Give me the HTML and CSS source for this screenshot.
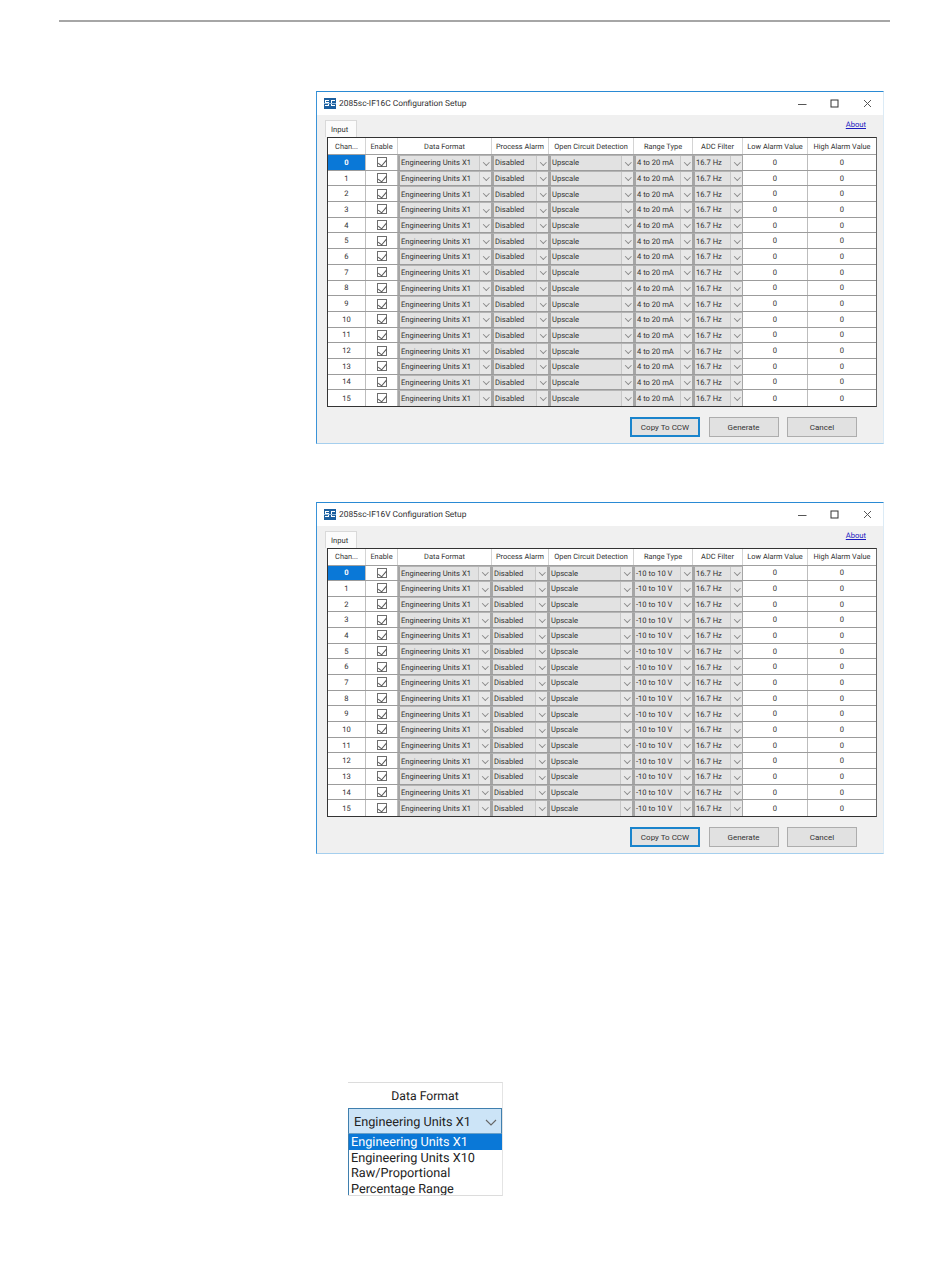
FILE: index.html
```html
<!DOCTYPE html>
<html lang="en">
<head>
<meta charset="utf-8">
<title>2085sc configuration setup</title>
<link rel="stylesheet" href="styles.css">
</head>
<body>
<div class="rule"></div>

<section class="window w1">
  <header class="titlebar">
    <svg class="logo" viewBox="0 0 12 11"><rect width="12" height="11" fill="#1c5f9f"/><path d="M1 2h4v1H2v1h3v4H1V7h3V5H1zM7 2h4v1H8v4h3v1H7z" fill="#fff"/><rect y="5" width="12" height="1" fill="#8fb6d8"/></svg>
    <span class="title">2085sc-IF16C Configuration Setup</span>
    <div class="controls">
      <svg viewBox="0 0 9 9"><path d="M0 5.5h8.5" stroke="#555" fill="none"/></svg>
      <svg viewBox="0 0 9 9"><rect x="1" y="1" width="7" height="7" stroke="#333" fill="none"/></svg>
      <svg viewBox="0 0 9 9"><path d="M1 1l7 7M8 1l-7 7" stroke="#555" fill="none"/></svg>
    </div>
  </header>
  <div class="client">
    <div class="tabs"><span class="tab">Input</span><a class="about">About</a></div>
    <div class="grid">
      <div class="row head"><div class="cell">Chan...</div><div class="cell">Enable</div><div class="cell">Data Format</div><div class="cell">Process Alarm</div><div class="cell">Open Circuit Detection</div><div class="cell">Range Type</div><div class="cell">ADC Filter</div><div class="cell">Low Alarm Value</div><div class="cell">High Alarm Value</div></div>
      <div class="row"><div class="cell current">0</div><div class="cell"><i class="chk"></i></div><div class="sel"><span>Engineering Units X1</span><i class="dd"></i></div><div class="sel"><span>Disabled</span><i class="dd"></i></div><div class="sel"><span>Upscale</span><i class="dd"></i></div><div class="sel"><span>4 to 20 mA</span><i class="dd"></i></div><div class="sel"><span>16.7 Hz</span><i class="dd"></i></div><div class="cell">0</div><div class="cell">0</div></div>
      <div class="row"><div class="cell">1</div><div class="cell"><i class="chk"></i></div><div class="sel"><span>Engineering Units X1</span><i class="dd"></i></div><div class="sel"><span>Disabled</span><i class="dd"></i></div><div class="sel"><span>Upscale</span><i class="dd"></i></div><div class="sel"><span>4 to 20 mA</span><i class="dd"></i></div><div class="sel"><span>16.7 Hz</span><i class="dd"></i></div><div class="cell">0</div><div class="cell">0</div></div>
      <div class="row"><div class="cell">2</div><div class="cell"><i class="chk"></i></div><div class="sel"><span>Engineering Units X1</span><i class="dd"></i></div><div class="sel"><span>Disabled</span><i class="dd"></i></div><div class="sel"><span>Upscale</span><i class="dd"></i></div><div class="sel"><span>4 to 20 mA</span><i class="dd"></i></div><div class="sel"><span>16.7 Hz</span><i class="dd"></i></div><div class="cell">0</div><div class="cell">0</div></div>
      <div class="row"><div class="cell">3</div><div class="cell"><i class="chk"></i></div><div class="sel"><span>Engineering Units X1</span><i class="dd"></i></div><div class="sel"><span>Disabled</span><i class="dd"></i></div><div class="sel"><span>Upscale</span><i class="dd"></i></div><div class="sel"><span>4 to 20 mA</span><i class="dd"></i></div><div class="sel"><span>16.7 Hz</span><i class="dd"></i></div><div class="cell">0</div><div class="cell">0</div></div>
      <div class="row"><div class="cell">4</div><div class="cell"><i class="chk"></i></div><div class="sel"><span>Engineering Units X1</span><i class="dd"></i></div><div class="sel"><span>Disabled</span><i class="dd"></i></div><div class="sel"><span>Upscale</span><i class="dd"></i></div><div class="sel"><span>4 to 20 mA</span><i class="dd"></i></div><div class="sel"><span>16.7 Hz</span><i class="dd"></i></div><div class="cell">0</div><div class="cell">0</div></div>
      <div class="row"><div class="cell">5</div><div class="cell"><i class="chk"></i></div><div class="sel"><span>Engineering Units X1</span><i class="dd"></i></div><div class="sel"><span>Disabled</span><i class="dd"></i></div><div class="sel"><span>Upscale</span><i class="dd"></i></div><div class="sel"><span>4 to 20 mA</span><i class="dd"></i></div><div class="sel"><span>16.7 Hz</span><i class="dd"></i></div><div class="cell">0</div><div class="cell">0</div></div>
      <div class="row"><div class="cell">6</div><div class="cell"><i class="chk"></i></div><div class="sel"><span>Engineering Units X1</span><i class="dd"></i></div><div class="sel"><span>Disabled</span><i class="dd"></i></div><div class="sel"><span>Upscale</span><i class="dd"></i></div><div class="sel"><span>4 to 20 mA</span><i class="dd"></i></div><div class="sel"><span>16.7 Hz</span><i class="dd"></i></div><div class="cell">0</div><div class="cell">0</div></div>
      <div class="row"><div class="cell">7</div><div class="cell"><i class="chk"></i></div><div class="sel"><span>Engineering Units X1</span><i class="dd"></i></div><div class="sel"><span>Disabled</span><i class="dd"></i></div><div class="sel"><span>Upscale</span><i class="dd"></i></div><div class="sel"><span>4 to 20 mA</span><i class="dd"></i></div><div class="sel"><span>16.7 Hz</span><i class="dd"></i></div><div class="cell">0</div><div class="cell">0</div></div>
      <div class="row"><div class="cell">8</div><div class="cell"><i class="chk"></i></div><div class="sel"><span>Engineering Units X1</span><i class="dd"></i></div><div class="sel"><span>Disabled</span><i class="dd"></i></div><div class="sel"><span>Upscale</span><i class="dd"></i></div><div class="sel"><span>4 to 20 mA</span><i class="dd"></i></div><div class="sel"><span>16.7 Hz</span><i class="dd"></i></div><div class="cell">0</div><div class="cell">0</div></div>
      <div class="row"><div class="cell">9</div><div class="cell"><i class="chk"></i></div><div class="sel"><span>Engineering Units X1</span><i class="dd"></i></div><div class="sel"><span>Disabled</span><i class="dd"></i></div><div class="sel"><span>Upscale</span><i class="dd"></i></div><div class="sel"><span>4 to 20 mA</span><i class="dd"></i></div><div class="sel"><span>16.7 Hz</span><i class="dd"></i></div><div class="cell">0</div><div class="cell">0</div></div>
      <div class="row"><div class="cell">10</div><div class="cell"><i class="chk"></i></div><div class="sel"><span>Engineering Units X1</span><i class="dd"></i></div><div class="sel"><span>Disabled</span><i class="dd"></i></div><div class="sel"><span>Upscale</span><i class="dd"></i></div><div class="sel"><span>4 to 20 mA</span><i class="dd"></i></div><div class="sel"><span>16.7 Hz</span><i class="dd"></i></div><div class="cell">0</div><div class="cell">0</div></div>
      <div class="row"><div class="cell">11</div><div class="cell"><i class="chk"></i></div><div class="sel"><span>Engineering Units X1</span><i class="dd"></i></div><div class="sel"><span>Disabled</span><i class="dd"></i></div><div class="sel"><span>Upscale</span><i class="dd"></i></div><div class="sel"><span>4 to 20 mA</span><i class="dd"></i></div><div class="sel"><span>16.7 Hz</span><i class="dd"></i></div><div class="cell">0</div><div class="cell">0</div></div>
      <div class="row"><div class="cell">12</div><div class="cell"><i class="chk"></i></div><div class="sel"><span>Engineering Units X1</span><i class="dd"></i></div><div class="sel"><span>Disabled</span><i class="dd"></i></div><div class="sel"><span>Upscale</span><i class="dd"></i></div><div class="sel"><span>4 to 20 mA</span><i class="dd"></i></div><div class="sel"><span>16.7 Hz</span><i class="dd"></i></div><div class="cell">0</div><div class="cell">0</div></div>
      <div class="row"><div class="cell">13</div><div class="cell"><i class="chk"></i></div><div class="sel"><span>Engineering Units X1</span><i class="dd"></i></div><div class="sel"><span>Disabled</span><i class="dd"></i></div><div class="sel"><span>Upscale</span><i class="dd"></i></div><div class="sel"><span>4 to 20 mA</span><i class="dd"></i></div><div class="sel"><span>16.7 Hz</span><i class="dd"></i></div><div class="cell">0</div><div class="cell">0</div></div>
      <div class="row"><div class="cell">14</div><div class="cell"><i class="chk"></i></div><div class="sel"><span>Engineering Units X1</span><i class="dd"></i></div><div class="sel"><span>Disabled</span><i class="dd"></i></div><div class="sel"><span>Upscale</span><i class="dd"></i></div><div class="sel"><span>4 to 20 mA</span><i class="dd"></i></div><div class="sel"><span>16.7 Hz</span><i class="dd"></i></div><div class="cell">0</div><div class="cell">0</div></div>
      <div class="row"><div class="cell">15</div><div class="cell"><i class="chk"></i></div><div class="sel"><span>Engineering Units X1</span><i class="dd"></i></div><div class="sel"><span>Disabled</span><i class="dd"></i></div><div class="sel"><span>Upscale</span><i class="dd"></i></div><div class="sel"><span>4 to 20 mA</span><i class="dd"></i></div><div class="sel"><span>16.7 Hz</span><i class="dd"></i></div><div class="cell">0</div><div class="cell">0</div></div>
    </div>
    <div class="buttons"><button class="btn primary">Copy To CCW</button><button class="btn">Generate</button><button class="btn">Cancel</button></div>
  </div>
</section>

<section class="window w2">
  <header class="titlebar">
    <svg class="logo" viewBox="0 0 12 11"><rect width="12" height="11" fill="#1c5f9f"/><path d="M1 2h4v1H2v1h3v4H1V7h3V5H1zM7 2h4v1H8v4h3v1H7z" fill="#fff"/><rect y="5" width="12" height="1" fill="#8fb6d8"/></svg>
    <span class="title">2085sc-IF16V Configuration Setup</span>
    <div class="controls">
      <svg viewBox="0 0 9 9"><path d="M0 5.5h8.5" stroke="#555" fill="none"/></svg>
      <svg viewBox="0 0 9 9"><rect x="1" y="1" width="7" height="7" stroke="#333" fill="none"/></svg>
      <svg viewBox="0 0 9 9"><path d="M1 1l7 7M8 1l-7 7" stroke="#555" fill="none"/></svg>
    </div>
  </header>
  <div class="client">
    <div class="tabs"><span class="tab">Input</span><a class="about">About</a></div>
    <div class="grid">
      <div class="row head"><div class="cell">Chan...</div><div class="cell">Enable</div><div class="cell">Data Format</div><div class="cell">Process Alarm</div><div class="cell">Open Circuit Detection</div><div class="cell">Range Type</div><div class="cell">ADC Filter</div><div class="cell">Low Alarm Value</div><div class="cell">High Alarm Value</div></div>
      <div class="row"><div class="cell current">0</div><div class="cell"><i class="chk"></i></div><div class="sel"><span>Engineering Units X1</span><i class="dd"></i></div><div class="sel"><span>Disabled</span><i class="dd"></i></div><div class="sel"><span>Upscale</span><i class="dd"></i></div><div class="sel"><span>-10 to 10 V</span><i class="dd"></i></div><div class="sel"><span>16.7 Hz</span><i class="dd"></i></div><div class="cell">0</div><div class="cell">0</div></div>
      <div class="row"><div class="cell">1</div><div class="cell"><i class="chk"></i></div><div class="sel"><span>Engineering Units X1</span><i class="dd"></i></div><div class="sel"><span>Disabled</span><i class="dd"></i></div><div class="sel"><span>Upscale</span><i class="dd"></i></div><div class="sel"><span>-10 to 10 V</span><i class="dd"></i></div><div class="sel"><span>16.7 Hz</span><i class="dd"></i></div><div class="cell">0</div><div class="cell">0</div></div>
      <div class="row"><div class="cell">2</div><div class="cell"><i class="chk"></i></div><div class="sel"><span>Engineering Units X1</span><i class="dd"></i></div><div class="sel"><span>Disabled</span><i class="dd"></i></div><div class="sel"><span>Upscale</span><i class="dd"></i></div><div class="sel"><span>-10 to 10 V</span><i class="dd"></i></div><div class="sel"><span>16.7 Hz</span><i class="dd"></i></div><div class="cell">0</div><div class="cell">0</div></div>
      <div class="row"><div class="cell">3</div><div class="cell"><i class="chk"></i></div><div class="sel"><span>Engineering Units X1</span><i class="dd"></i></div><div class="sel"><span>Disabled</span><i class="dd"></i></div><div class="sel"><span>Upscale</span><i class="dd"></i></div><div class="sel"><span>-10 to 10 V</span><i class="dd"></i></div><div class="sel"><span>16.7 Hz</span><i class="dd"></i></div><div class="cell">0</div><div class="cell">0</div></div>
      <div class="row"><div class="cell">4</div><div class="cell"><i class="chk"></i></div><div class="sel"><span>Engineering Units X1</span><i class="dd"></i></div><div class="sel"><span>Disabled</span><i class="dd"></i></div><div class="sel"><span>Upscale</span><i class="dd"></i></div><div class="sel"><span>-10 to 10 V</span><i class="dd"></i></div><div class="sel"><span>16.7 Hz</span><i class="dd"></i></div><div class="cell">0</div><div class="cell">0</div></div>
      <div class="row"><div class="cell">5</div><div class="cell"><i class="chk"></i></div><div class="sel"><span>Engineering Units X1</span><i class="dd"></i></div><div class="sel"><span>Disabled</span><i class="dd"></i></div><div class="sel"><span>Upscale</span><i class="dd"></i></div><div class="sel"><span>-10 to 10 V</span><i class="dd"></i></div><div class="sel"><span>16.7 Hz</span><i class="dd"></i></div><div class="cell">0</div><div class="cell">0</div></div>
      <div class="row"><div class="cell">6</div><div class="cell"><i class="chk"></i></div><div class="sel"><span>Engineering Units X1</span><i class="dd"></i></div><div class="sel"><span>Disabled</span><i class="dd"></i></div><div class="sel"><span>Upscale</span><i class="dd"></i></div><div class="sel"><span>-10 to 10 V</span><i class="dd"></i></div><div class="sel"><span>16.7 Hz</span><i class="dd"></i></div><div class="cell">0</div><div class="cell">0</div></div>
      <div class="row"><div class="cell">7</div><div class="cell"><i class="chk"></i></div><div class="sel"><span>Engineering Units X1</span><i class="dd"></i></div><div class="sel"><span>Disabled</span><i class="dd"></i></div><div class="sel"><span>Upscale</span><i class="dd"></i></div><div class="sel"><span>-10 to 10 V</span><i class="dd"></i></div><div class="sel"><span>16.7 Hz</span><i class="dd"></i></div><div class="cell">0</div><div class="cell">0</div></div>
      <div class="row"><div class="cell">8</div><div class="cell"><i class="chk"></i></div><div class="sel"><span>Engineering Units X1</span><i class="dd"></i></div><div class="sel"><span>Disabled</span><i class="dd"></i></div><div class="sel"><span>Upscale</span><i class="dd"></i></div><div class="sel"><span>-10 to 10 V</span><i class="dd"></i></div><div class="sel"><span>16.7 Hz</span><i class="dd"></i></div><div class="cell">0</div><div class="cell">0</div></div>
      <div class="row"><div class="cell">9</div><div class="cell"><i class="chk"></i></div><div class="sel"><span>Engineering Units X1</span><i class="dd"></i></div><div class="sel"><span>Disabled</span><i class="dd"></i></div><div class="sel"><span>Upscale</span><i class="dd"></i></div><div class="sel"><span>-10 to 10 V</span><i class="dd"></i></div><div class="sel"><span>16.7 Hz</span><i class="dd"></i></div><div class="cell">0</div><div class="cell">0</div></div>
      <div class="row"><div class="cell">10</div><div class="cell"><i class="chk"></i></div><div class="sel"><span>Engineering Units X1</span><i class="dd"></i></div><div class="sel"><span>Disabled</span><i class="dd"></i></div><div class="sel"><span>Upscale</span><i class="dd"></i></div><div class="sel"><span>-10 to 10 V</span><i class="dd"></i></div><div class="sel"><span>16.7 Hz</span><i class="dd"></i></div><div class="cell">0</div><div class="cell">0</div></div>
      <div class="row"><div class="cell">11</div><div class="cell"><i class="chk"></i></div><div class="sel"><span>Engineering Units X1</span><i class="dd"></i></div><div class="sel"><span>Disabled</span><i class="dd"></i></div><div class="sel"><span>Upscale</span><i class="dd"></i></div><div class="sel"><span>-10 to 10 V</span><i class="dd"></i></div><div class="sel"><span>16.7 Hz</span><i class="dd"></i></div><div class="cell">0</div><div class="cell">0</div></div>
      <div class="row"><div class="cell">12</div><div class="cell"><i class="chk"></i></div><div class="sel"><span>Engineering Units X1</span><i class="dd"></i></div><div class="sel"><span>Disabled</span><i class="dd"></i></div><div class="sel"><span>Upscale</span><i class="dd"></i></div><div class="sel"><span>-10 to 10 V</span><i class="dd"></i></div><div class="sel"><span>16.7 Hz</span><i class="dd"></i></div><div class="cell">0</div><div class="cell">0</div></div>
      <div class="row"><div class="cell">13</div><div class="cell"><i class="chk"></i></div><div class="sel"><span>Engineering Units X1</span><i class="dd"></i></div><div class="sel"><span>Disabled</span><i class="dd"></i></div><div class="sel"><span>Upscale</span><i class="dd"></i></div><div class="sel"><span>-10 to 10 V</span><i class="dd"></i></div><div class="sel"><span>16.7 Hz</span><i class="dd"></i></div><div class="cell">0</div><div class="cell">0</div></div>
      <div class="row"><div class="cell">14</div><div class="cell"><i class="chk"></i></div><div class="sel"><span>Engineering Units X1</span><i class="dd"></i></div><div class="sel"><span>Disabled</span><i class="dd"></i></div><div class="sel"><span>Upscale</span><i class="dd"></i></div><div class="sel"><span>-10 to 10 V</span><i class="dd"></i></div><div class="sel"><span>16.7 Hz</span><i class="dd"></i></div><div class="cell">0</div><div class="cell">0</div></div>
      <div class="row"><div class="cell">15</div><div class="cell"><i class="chk"></i></div><div class="sel"><span>Engineering Units X1</span><i class="dd"></i></div><div class="sel"><span>Disabled</span><i class="dd"></i></div><div class="sel"><span>Upscale</span><i class="dd"></i></div><div class="sel"><span>-10 to 10 V</span><i class="dd"></i></div><div class="sel"><span>16.7 Hz</span><i class="dd"></i></div><div class="cell">0</div><div class="cell">0</div></div>
    </div>
    <div class="buttons"><button class="btn primary">Copy To CCW</button><button class="btn">Generate</button><button class="btn">Cancel</button></div>
  </div>
</section>

<section class="picker">
  <div class="picker-head">Data Format</div>
  <div class="picker-box"><span>Engineering Units X1</span><svg viewBox="0 0 12 7"><path d="M1 1l5 5 5-5" fill="none" stroke="#666" stroke-width="1.1"/></svg></div>
  <ul class="picker-list">
    <li class="on">Engineering Units X1</li>
    <li>Engineering Units X10</li>
    <li>Raw/Proportional</li>
    <li>Percentage Range</li>
  </ul>
</section>
</body>
</html>
```
FILE: styles.css
```css
* { box-sizing: border-box; }
html, body { margin: 0; background: #fff; }
body {
  height: 1267px;
  overflow: hidden;
  padding-top: 20px;
  font-family: Roboto, "Liberation Sans", Arial, sans-serif;
  color: #333;
  text-rendering: geometricPrecision;
}
.rule { height: 2px; margin: 0 60px 0 59px; background: #a6a6a6; }

.window {
  width: 568px;
  margin-left: 316px;
  border: 1px solid #dcebf6;
  border-top-color: #2a8ad4;
  border-left-color: #3a93d8;
  border-bottom-color: #a5cfee;
  font-size: 7.6px;
}
.w1 { margin-top: 69px; }
.w2 { margin-top: 58px; }

.titlebar { display: flex; align-items: center; height: 23px; padding-left: 7px; background: #fff; }
.logo { width: 12px; height: 11px; margin-right: 3px; }
.title { font-size: 8.4px; color: #333; }
.controls { display: flex; gap: 23.7px; margin-left: auto; padding-right: 11px; }
.controls svg { width: 9px; height: 9px; display: block; }

.client { background: #f0f0f0; padding: 5px 0 6px 10px; }
.tabs { display: flex; justify-content: space-between; height: 17px; padding-right: 17px; margin-left: -2px; }
.tab {
  width: 32px;
  padding: 4px 0 0 5px;
  background: #fbfbfb;
  border: 1px solid #d9d9d9;
  border-bottom: 0;
}
.about { margin-top: -1px; color: #1a1ac0; text-decoration: underline; line-height: 11px; }

.grid {
  width: 550px;
  background: #fff;
  border: 1px solid #333;
  border-right-color: #6a6a6a;
}
.row {
  display: grid;
  grid-template-columns: 38px 32px 94px 57px 85px 59px 50px 65px 68px;
  height: 15.7px;
  border-bottom: 1px solid #9c9c9c;
}
.w2 .row { height: 15.66px; grid-template-columns: 38px 32px 93px 57px 85px 60px 50px 65px 68px; }
.row:last-child { border-bottom: 0; }
.row.head { height: 17px; border-bottom: 1px solid #a0a0a0; font-size: 7.4px; }
.w2 .row.head { height: 16.5px; grid-template-columns: 38px 32px 94px 57px 85px 59px 50px 65px 68px; }
.cell {
  display: flex;
  align-items: center;
  justify-content: center;
  border-right: 1px solid #bdbdbd;
  white-space: nowrap;
  overflow: hidden;
}
.cell:last-child { border-right: 0; }
.head .cell { border-right-color: #d4d4d4; }
.current { background: #0a78d7; color: #fff; font-weight: bold; }

.chk {
  position: relative;
  width: 10px;
  height: 10px;
  border: 1px solid #6e6e6e;
  background: #fff;
}
.chk::after {
  content: "";
  position: absolute;
  left: 2px;
  top: 0;
  width: 4px;
  height: 6.5px;
  border: solid #555;
  border-width: 0 1px 1px 0;
  transform: rotate(40deg);
}

.sel {
  display: flex;
  align-items: center;
  min-width: 0;
  background: #e2e2e2;
  border-left: 2px solid #a6a6a6;
  border-right: 1px solid #a6a6a6;
  border-top: 1px solid #b4b4b4;
}
.sel span { flex: 1; padding-left: 1px; white-space: nowrap; overflow: hidden; }
.dd {
  position: relative;
  align-self: stretch;
  width: 12px;
  border-left: 1px solid #c8c8c8;
  background: #e8e8e8;
}
.dd::after {
  content: "";
  position: absolute;
  left: 3.5px;
  top: 3.5px;
  width: 3.6px;
  height: 3.6px;
  border: solid #888;
  border-width: 0 1px 1px 0;
  transform: rotate(45deg);
}

.buttons { display: flex; justify-content: flex-end; gap: 8.5px; margin-top: 10px; padding-right: 26px; }
.btn {
  width: 70px;
  height: 20px;
  padding: 0;
  background: #e1e1e1;
  border: 1px solid #adadad;
  color: #333;
  font: 8px Roboto, "Liberation Sans", Arial, sans-serif;
}
.btn.primary { border: 2px solid #1a84cc; }

.picker {
  width: 155px;
  height: 114px;
  margin: 228px 0 0 348px;
  border-top: 1px solid #dcdcdc;
  border-right: 1px solid #e4e4e4;
  border-bottom: 1px solid #dcdcdc;
  overflow: hidden;
  font-size: 12.7px;
  color: #222;
}
.picker-head { height: 25px; line-height: 27px; text-align: center; font-size: 12.2px; }
.picker-box {
  display: flex;
  align-items: center;
  justify-content: space-between;
  height: 26px;
  padding: 2px 4px 0 5px;
  background: #cce4f7;
  border: 1px solid #3f7fae;
  border-bottom-color: #6aa0c8;
}
.picker-box svg { width: 12px; height: 7px; }
.picker-list { margin: 0; padding: 0; list-style: none; border-left: 1px solid #3f7fae; }
.picker-list li { height: 15.7px; line-height: 18.5px; padding-left: 2px; }
.picker-list .on { background: #0a78d7; color: #fff; }
```
